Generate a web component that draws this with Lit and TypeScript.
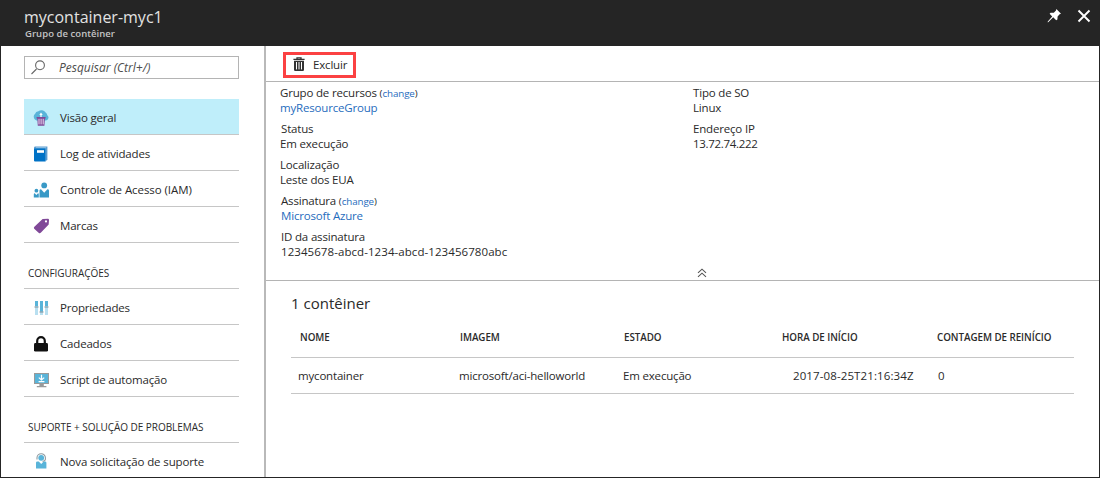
import { LitElement, html, svg, css } from "lit";
import { customElement } from "lit/decorators.js";

const icons: Record<string, unknown> = {
  cloud: svg`<path fill="#59b4d9" d="M3.4 10.4A3.4 3.4 0 0 1 .8 7.2 3.3 3.3 0 0 1 2 4 4 4 0 0 1 5.4 1.2 5 5 0 0 1 12.6 2.4 3.4 3.4 0 0 1 14.3 5.2 2.9 2.9 0 0 1 13 10.4Z"/>
    <path fill="#fff" d="M8 2.6 9.7 5H8.6V7.4H7.4V5H6.3Z"/>
    <path fill="#804998" d="M3.6 7H12.6V8.4H11.9L11.4 15.8H4.8L4.3 8.4H3.6Z"/>
    <path stroke="#e9dcee" stroke-width="1" d="M6 8.8V14.4M8.1 8.8V14.4M10.2 8.8V14.4"/>`,
  book: svg`<path fill="#b9d9ef" d="M2.4 1H14V14H2.4Z"/><path fill="#5a9bd0" d="M1 1.8Q1 .4 2.4 .4H14.4V1.4H3V2.2H1ZM13.4 1.4H14.4V14L12.6 15V2.4Z"/>
    <path fill="#0072c6" d="M1 2.2H12.6V15.4H2Q1 15.4 1 14.4Z"/><path fill="#fff" d="M4 4.2H11V6.8H4Z"/>`,
  people: svg`<circle cx="11.2" cy="3.4" r="2.9" fill="#3999c6"/><circle cx="3.4" cy="8.7" r="1.9" fill="#3999c6"/>
    <path fill="#3999c6" d="M6.5 15.4V8.4Q6.5 7.2 8 7.2L11.2 10.8 14.4 7.2Q16 7.2 16 8.4V15.4ZM.8 15.4V12.4Q.8 11.4 1.7 11.3L3.4 13 5 11.3Q5.8 11.4 5.8 12.4V15.4Z"/>`,
  tag: svg`<path fill="#804998" d="M9.6 1.1 15 .8Q16 .8 16 2L15.7 6.5 8 14.6Q6.8 15.8 5.6 14.7L1.2 10.7Q.4 9.8 1.4 8.8Z"/><circle cx="13" cy="3.4" r="1.1" fill="#fff"/>`,
  sliders: svg`<path fill="#b8dff0" d="M2 1H5V15H2ZM7 1H10V15H7ZM12 1H15V15H12Z"/>
    <path fill="#59b4d9" d="M2 1H5V6H2ZM7 1H10V11.4H7ZM12 1H15V6H12Z"/>
    <path fill="#7a8d96" d="M1.5 6.4H5.5V7.4H1.5ZM6.5 11.4H10.5V12.4H6.5ZM11.5 6.4H15.5V7.4H11.5Z"/>`,
  lock: svg`<path fill="none" stroke="#111" stroke-width="2.2" d="M4.2 8V5A3.8 3.8 0 0 1 11.8 5V8"/>
    <path fill="#111" d="M2.4 7H13.6Q15 7 15 8.4V14.2Q15 15.4 13.6 15.4H2.4Q1 15.4 1 14.2V8.4Q1 7 2.4 7Z"/>`,
  script: svg`<path fill="#999" d="M1 1H16V12H1ZM6.4 12H10.8V14H6.4ZM3.8 14H13.4V15.2H3.8Z"/>
    <path fill="#59b4d9" d="M2 2H15V11H2Z"/><path stroke="#fff" stroke-width="1.2" fill="none" d="M8.5 2.8V7.8M5.8 5.6 8.5 8 11.2 5.6M5.6 9.6H11.4"/>`,
  support: svg`<circle cx="8.2" cy="4.8" r="2.9" fill="#59b4d9"/><path fill="none" stroke="#8f9aa0" stroke-width="1.1" d="M4 6.4V4.8A4.2 4.1 0 0 1 12.4 4.8V6.4Q12.2 8.2 9.6 8.5"/>
    <path fill="#59b4d9" d="M3 15.6V9.8Q3 8.6 4.4 8.6H5.8L8.2 11 10.6 8.6H12Q13.4 8.6 13.4 9.8V15.6Z"/>`,
};

interface Item { icon: string; label: string; cls?: string }
const general: Item[] = [
  { icon: "cloud", label: "Visão geral", cls: "selected" },
  { icon: "book", label: "Log de atividades" },
  { icon: "people", label: "Controle de Acesso (IAM)", cls: "loose" },
  { icon: "tag", label: "Marcas" },
];
const settings: Item[] = [
  { icon: "sliders", label: "Propriedades" },
  { icon: "lock", label: "Cadeados" },
  { icon: "script", label: "Script de automação" },
];
const support: Item[] = [{ icon: "support", label: "Nova solicitação de suporte", cls: "last" }];

@customElement("app-root")
export class AppRoot extends LitElement {
  static styles = css`
    :host { display: flex; flex-direction: column; box-sizing: border-box; width: 1100px; height: 478px; overflow: hidden;
      border: 1px solid #252525; border-top: 0; background: #fff; color: #2a2a2a;
      font-family: "Open Sans", "Noto Sans", sans-serif; font-size: 11.5px; letter-spacing: -0.18px; line-height: 15px; white-space: nowrap; }
    * { box-sizing: border-box; }
    svg { display: block; flex: none; }
    header { flex: none; height: 46px; background: #252525; color: #e2e2e2; display: flex; justify-content: space-between; padding: 7px 8px 0 23px; }
    .name { font-size: 16px; line-height: 20px; letter-spacing: 0; }
    .kind { font-size: 9.5px; line-height: 13px; font-weight: 600; letter-spacing: 0.05px; color: #c4c4c4; padding: 0 0 0 1px; }
    .actions { display: flex; gap: 15px; padding-top: 1px; }
    .body { flex: 1; min-height: 0; display: flex; }
    aside { width: 265px; flex: none; border-right: 2px solid #b9b9b9; padding: 10px 25px 0 23px; overflow: hidden; }
    .search { height: 23px; border: 1px solid #b4b4b4; display: flex; align-items: center; gap: 14px; padding-left: 6px; font-style: italic; font-size: 12px; letter-spacing: 0; color: #4d4d4d; margin-bottom: 20px; }
    .item { height: 36px; border-bottom: 1px solid #c6c6c6; display: flex; align-items: center; gap: 10px; padding: 2px 0 0 9px; }
    .selected { background: #bfeefa; }
    .loose { letter-spacing: -0.07px; }
    .last { border: 0; padding-top: 0; letter-spacing: -0.14px; }
    .group { height: 46px; border-bottom: 1px solid #c6c6c6; padding: 23px 0 0 4px; font-size: 10px; letter-spacing: -0.05px; }
    main { flex: 1; min-width: 0; display: flex; flex-direction: column; }
    .toolbar { height: 36px; flex: none; border-bottom: 1px solid #b4b4b4; padding: 6px 0 0 17px; }
    .delete { width: 73px; height: 26px; border: 3px solid #fb4142; display: flex; align-items: center; gap: 8px; padding: 0 0 2px 7px; }
    .essentials { height: 199px; flex: none; border-bottom: 1px solid #b4b4b4; padding: 3px 0 0 14px; display: flex; flex-direction: column; }
    .cols { display: grid; grid-template-columns: 413px 1fr; height: 182px; }
    .col { display: flex; flex-direction: column; gap: 6px; }
    .col > div > div { height: 15px; }
    .shift { padding-left: 1px; }
    .id { letter-spacing: 0.07px; }
    .ip { letter-spacing: -0.3px; }
    .link { color: #1f6cbd; }
    small { font-size: 9.8px; letter-spacing: -0.1px; line-height: 1; }
    .chevrons { align-self: center; margin: 1px 0 0 25px; }
    .list { padding: 11px 25px 0 25px; }
    .title { font-size: 15px; line-height: 22px; letter-spacing: 0; }
    .row { display: grid; grid-template-columns: 161px 164px 158px 157px 1fr; align-items: center; border-bottom: 1px solid #c6c6c6; height: 36px; padding: 0 0 0 7px; }
    .head { grid-template-columns: 160px 164px 158px 155px 1fr; height: 44px; padding: 4px 0 0 9px; font-size: 9.8px; font-weight: 600; letter-spacing: -0.04px; }
    .time { padding-left: 12px; letter-spacing: 0.11px; }
  `;

  item = (i: Item) => html`<div class="item ${i.cls ?? ""}"><svg width="17" height="16" viewBox="0 0 17 16">${icons[i.icon]}</svg><span>${i.label}</span></div>`;

  render() {
    return html`
      <header>
        <div><div class="name">mycontainer-myc1</div><div class="kind">Grupo de contêiner</div></div>
        <div class="actions">
          <svg width="15" height="16" viewBox="0 0 15 16"><path fill="#fff" d="M9.4 1 14 5.8 12.6 6.2 10.6 8.4 10.4 11.4 9.2 12.2 6.2 9.3 1.2 14.2.6 14.3.8 13.6 5.2 8.4 2.6 5.8 3.6 4.8 6.8 4.7 9 2.6Z"/></svg>
          <svg width="14" height="16" viewBox="0 0 14 16"><path fill="none" stroke="#fff" stroke-width="1.9" d="M1.5 2.5 12.5 13.5M12.5 2.5 1.5 13.5"/></svg>
        </div>
      </header>
      <div class="body">
        <aside>
          <div class="search"><svg width="14" height="15" viewBox="0 0 14 15"><path fill="none" stroke="#666" stroke-width="1.1" d="M.5 14 5.5 9"/><circle cx="9" cy="5.3" r="4.4" fill="none" stroke="#666" stroke-width="1.1"/></svg><span>Pesquisar (Ctrl+/)</span></div>
          ${general.map(this.item)}
          <div class="group">CONFIGURAÇÕES</div>
          ${settings.map(this.item)}
          <div class="group">SUPORTE + SOLUÇÃO DE PROBLEMAS</div>
          ${support.map(this.item)}
        </aside>
        <main>
          <div class="toolbar"><div class="delete">
            <svg width="12" height="14" viewBox="0 0 12 14"><path fill="none" stroke="#333" stroke-width="1.3" d="M4 2V.8H8V2"/><path fill="#333" d="M.4 1.7H11.6V3H.4ZM1 3.8H11V12.8Q11 14 9.8 14H2.2Q1 14 1 12.8Z"/><path stroke="#fff" stroke-width="1" d="M3.5 5V12.4M6 5V12.4M8.5 5V12.4"/></svg>
            <span>Excluir</span></div></div>
          <div class="essentials">
            <div class="cols">
              <div class="col">
                <div><div>Grupo de recursos <small>(<span class="link">change</span>)</small></div><div class="link">myResourceGroup</div></div>
                <div><div class="shift">Status</div><div>Em execução</div></div>
                <div><div>Localização</div><div>Leste dos EUA</div></div>
                <div class="shift"><div>Assinatura <small>(<span class="link">change</span>)</small></div><div class="link">Microsoft Azure</div></div>
                <div class="shift"><div>ID da assinatura</div><div class="id">12345678-abcd-1234-abcd-123456780abc</div></div>
              </div>
              <div class="col">
                <div><div>Tipo de SO</div><div>Linux</div></div>
                <div><div>Endereço IP</div><div class="ip">13.72.74.222</div></div>
              </div>
            </div>
            <svg class="chevrons" width="10" height="10" viewBox="0 0 10 10"><path fill="none" stroke="#555" stroke-width="1.1" d="M1 4.8 5 1.2 9 4.8M1 8.8 5 5.2 9 8.8"/></svg>
          </div>
          <div class="list">
            <div class="title">1 contêiner</div>
            <div class="row head"><span>NOME</span><span>IMAGEM</span><span>ESTADO</span><span>HORA DE INÍCIO</span><span>CONTAGEM DE REINÍCIO</span></div>
            <div class="row"><span>mycontainer</span><span>microsoft/aci-helloworld</span><span>Em execução</span><span class="time">2017-08-25T21:16:34Z</span><span>0</span></div>
          </div>
        </main>
      </div>`;
  }
}
